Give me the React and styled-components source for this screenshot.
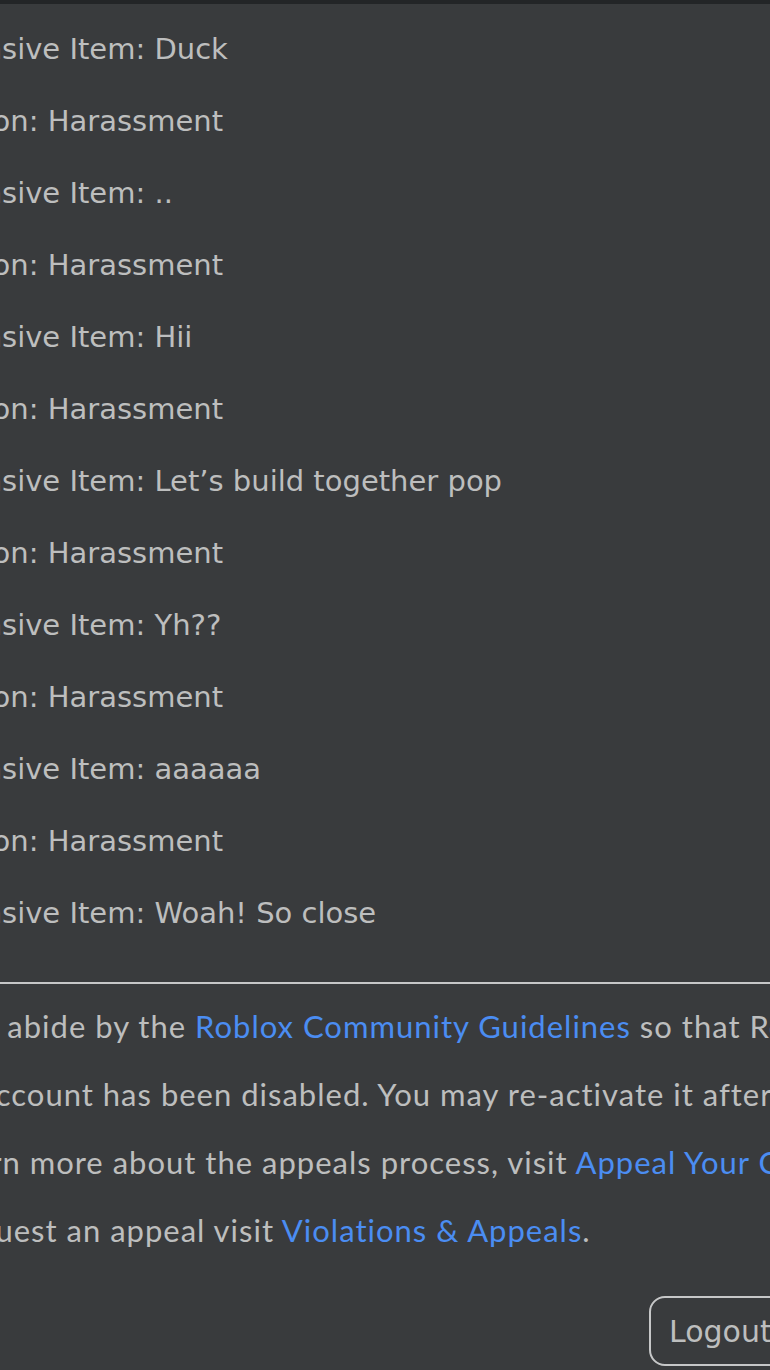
import React from 'react'
import styled, {createGlobalStyle} from 'styled-components'

const GlobalStyle = createGlobalStyle`
  html, body {
    margin: 0;
    padding: 0;
    background: #393b3d;
    overflow: hidden;
  }
`

const Viewport = styled.div`
  width: 770px;
  height: 1370px;
  overflow: hidden;
  background: #393b3d;
  border-top: 4px solid #232527;
  box-sizing: border-box;
`

const Page = styled.div`
  width: 902px;
  margin-left: -93px;
  padding-top: 9px;
`

const ItemList = styled.div`
  display: flex;
  flex-direction: column;
  padding-left: 16px;
`

const ItemRow = styled.div`
  height: 72px;
  line-height: 72px;
  white-space: nowrap;
  font-family: "DejaVu Sans", Inter, sans-serif;
  font-size: 29px;
  color: #bdbebe;
`

const Divider = styled.hr`
  margin: 33px 0 8px;
  border: 0;
  height: 2px;
  background: #c6c7c8;
`

const Notes = styled.div`
  display: flex;
  flex-direction: column;
  margin-left: -2px;
`

const Note = styled.p`
  margin: 0;
  height: 68px;
  line-height: 68px;
  white-space: nowrap;
  font-family: Lato, "Liberation Sans", sans-serif;
  font-size: 31px;
  letter-spacing: 1px;
  color: #bdbebe;
`

const TextLink = styled.a`
  color: #4b8df2;
  text-decoration: none;
`

const Footer = styled.div`
  display: flex;
  justify-content: flex-end;
  margin-top: 32px;
`

const LogoutButton = styled.button`
  width: 160px;
  height: 70px;
  padding: 0 0 0 18px;
  text-align: left;
  background: transparent;
  border: 2px solid #c6c7c8;
  border-radius: 16px;
  font-family: "DejaVu Sans", Inter, sans-serif;
  font-size: 30px;
  color: #bdbebe;
`

const items = [
    ['Offensive Item', 'Duck'],
    ['Reason', 'Harassment'],
    ['Offensive Item', '..'],
    ['Reason', 'Harassment'],
    ['Offensive Item', 'Hii'],
    ['Reason', 'Harassment'],
    ['Offensive Item', 'Let\u2019s build together pop'],
    ['Reason', 'Harassment'],
    ['Offensive Item', 'Yh??'],
    ['Reason', 'Harassment'],
    ['Offensive Item', 'aaaaaa'],
    ['Reason', 'Harassment'],
    ['Offensive Item', 'Woah! So close'],
]

export default function App() {
    return (
        <Viewport>
            <GlobalStyle />
            <Page>
                <ItemList>
                    {items.map(([label, value], i) => (
                        <ItemRow key={i}>
                            {label}: {value}
                        </ItemRow>
                    ))}
                </ItemList>
                <Divider />
                <Notes>
                    <Note>
                        Please abide by the <TextLink href="#">Roblox Community Guidelines</TextLink> so that Roblox can be fun for everyone.
                    </Note>
                    <Note>
                        Your account has been disabled. You may re-activate it after agreeing to our Terms of Use.
                    </Note>
                    <Note>
                        To learn more about the appeals process, visit <TextLink href="#">Appeal Your Content or Account</TextLink>.
                    </Note>
                    <Note>
                        To request an appeal visit <TextLink href="#">Violations &amp; Appeals</TextLink>.
                    </Note>
                </Notes>
                <Footer>
                    <LogoutButton>Logout</LogoutButton>
                </Footer>
            </Page>
        </Viewport>
    )
}
